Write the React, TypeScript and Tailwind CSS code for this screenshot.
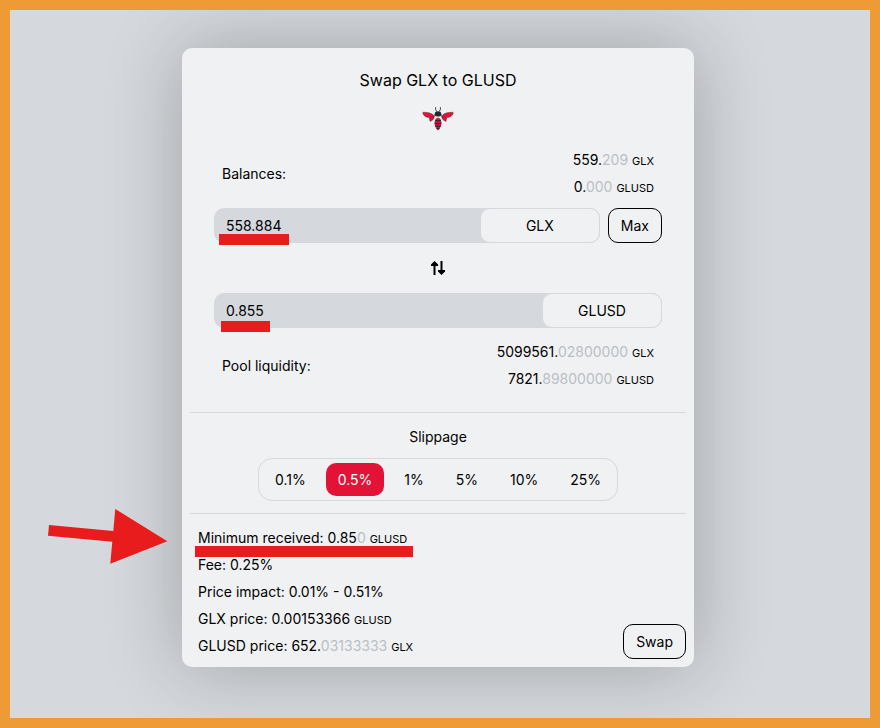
import { useState } from 'react';
import clsx from 'clsx';

interface AmountProps {
  whole: string;
  decimals?: string;
  unit: string;
}

const Amount = ({ whole, decimals, unit }: AmountProps) => (
  <span>
    {whole}
    {decimals && <span className="text-[#b9bfc5]">{decimals}</span>}{' '}
    <span className="text-[11px] leading-none">{unit}</span>
  </span>
);

interface TokenFieldProps {
  id: string;
  token: string;
  value: string;
  onChange: (value: string) => void;
  markClassName: string;
}

const TokenField = ({ id, token, value, onChange, markClassName }: TokenFieldProps) => (
  <div className="relative flex h-[35px] min-w-0 flex-1 rounded-[10px] bg-[#d5d8dd]">
    <input
      id={id}
      aria-label={`${token} amount`}
      className="min-w-0 flex-1 bg-transparent pl-3 outline-none"
      value={value}
      onChange={(e) => onChange(e.target.value)}
    />
    <button
      type="button"
      className="w-[120px] rounded-[10px] border border-[#d5d8dd] bg-[#f0f1f3]"
    >
      {token}
    </button>
    <span className={clsx('absolute h-[11px] bg-[#e81c1c]', markClassName)} />
  </div>
);

const BeeLogo = () => (
  <svg width="32" height="26" viewBox="0 0 32 26" aria-hidden="true">
    <g fill="none" stroke="#3b4045" strokeWidth="1">
      <path d="M13.6 1.2v2.2l1 2" />
      <path d="M18.4 1.2v2.2l-1 2" />
    </g>
    <path d="M12.8 7.6Q13 5.2 16 5.2t3.2 2.4l.6 1.6q-1.6 1.3-3.8 1.3t-3.8-1.3z" fill="#202a33" />
    <g fill="#e31337" stroke="#5a2530" strokeWidth=".5">
      <path d="M.8 7.2Q.4 6.2 2 6.2q6.4 0 9.4 2.8l1 1.4-3 1.6Q2 11.6.8 7.2z" />
      <path d="M12.4 10.6q-.4 3.4-4.2 4.8-1-1.800-.6-3.600z" />
      <path d="M31.2 7.2q.4-1-1.2-1-6.400 0-9.400 2.800l-1 1.400 3 1.600q7.400-.4 8.600-4.800z" />
      <path d="M19.6 10.6q.4 3.400 4.200 4.800 1-1.800.6-3.600z" />
    </g>
    <path d="M16 11.4q3.400 1.200 3.400 5.600 0 4.400-3.400 7.400-3.400-3-3.400-7.400 0-4.400 3.400-5.600z" fill="#d9153a" />
    <path
      d="M13.2 14.2q2.800 1 5.600 0M12.600 17q3.400 1.200 6.800 0M13 19.800q3 1.200 6 0M14.500 22.500q1.500.6 3 0"
      fill="none"
      stroke="#282630"
      strokeWidth="1.1"
    />
  </svg>
);

const SwapArrows = () => (
  <svg width="14" height="14" viewBox="0.5 0 14 14" aria-hidden="true">
    <g fill="none" stroke="#000" strokeWidth="2">
      <path d="M4 2v12" />
      <path d="M11 0v12" />
    </g>
    <path d="M4 0l3.600 3.600v1.400H.5V3.600z" />
    <path d="M11 14l3.500-3.600V9H7.500v1.400z" />
  </svg>
);

const slippages = ['0.1%', '0.5%', '1%', '5%', '10%', '25%'];

const outlineButton = 'h-[35px] rounded-[10px] border border-black px-3';

const App = () => {
  const [from, setFrom] = useState('558.884');
  const [to, setTo] = useState('0.855');
  const [slippage, setSlippage] = useState('0.5%');

  return (
    <div className="flex min-h-screen items-start justify-center overflow-hidden border-[10px] border-[#ee9a35] bg-[#d5d8dd] pt-[38px] pr-1 font-['Inter',sans-serif] text-sm text-black">
      <main className="relative w-full max-w-lg rounded-[10px] bg-[#f0f1f3] p-2 shadow-[0_0_75px_rgba(20,30,20,0.28)]">
        <h1 className="pt-3 text-center text-base leading-6">Swap GLX to GLUSD</h1>
        <div className="mt-[14px] flex justify-center">
          <BeeLogo />
        </div>

        <section className="px-6">
          <div className="mt-[14px] flex items-center justify-between px-2 leading-[27px]">
            <span>Balances:</span>
            <div className="flex flex-col text-right">
              <Amount whole="559." decimals="209" unit="GLX" />
              <Amount whole="0." decimals="000" unit="GLUSD" />
            </div>
          </div>
          <div className="mt-2 flex gap-2">
            <TokenField
              id="from"
              token="GLX"
              value={from}
              onChange={setFrom}
              markClassName="left-[5px] top-[26px] w-[70px]"
            />
            <button type="button" className={outlineButton}>
              Max
            </button>
          </div>
          <div className="flex h-[50px] items-center justify-center">
            <button type="button" aria-label="Switch tokens">
              <SwapArrows />
            </button>
          </div>
          <div className="flex">
            <TokenField
              id="to"
              token="GLUSD"
              value={to}
              onChange={setTo}
              markClassName="left-[7px] top-[28px] w-[49px]"
            />
          </div>
          <div className="mt-[10px] flex items-center justify-between px-2 leading-[27px]">
            <span>Pool liquidity:</span>
            <div className="flex flex-col text-right">
              <Amount whole="5099561." decimals="02800000" unit="GLX" />
              <Amount whole="7821." decimals="89800000" unit="GLUSD" />
            </div>
          </div>
        </section>

        <section className="mt-5 flex flex-col items-center border-y border-[#d5d8dd] pt-[10px] pb-3">
          <h2 className="leading-[27px]">Slippage</h2>
          <div className="mt-2 flex gap-2 rounded-[14px] border border-[#d5d8dd] p-1">
            {slippages.map((s) => (
              <button
                key={s}
                type="button"
                aria-pressed={s === slippage}
                onClick={() => setSlippage(s)}
                className={clsx(
                  'h-[33px] rounded-[10px] px-3',
                  s === slippage && 'bg-[#e31337] text-white',
                )}
              >
                {s}
              </button>
            ))}
          </div>
        </section>

        <section className="mt-[10px] flex items-end justify-between">
          <div className="flex flex-col pl-2 leading-[27px]">
            <div className="relative">
              Minimum received: <Amount whole="0.85" decimals="0" unit="GLUSD" />
              <span className="absolute top-[22px] -left-[3px] h-[11px] w-[218px] bg-[#e81c1c]" />
            </div>
            <div>Fee: 0.25%</div>
            <div>Price impact: 0.01% - 0.51%</div>
            <div>
              GLX price: <Amount whole="0.00153366" unit="GLUSD" />
            </div>
            <div>
              GLUSD price: <Amount whole="652." decimals="03133333" unit="GLX" />
            </div>
          </div>
          <button type="button" className={outlineButton}>
            Swap
          </button>
        </section>

        {/* arrow pointing at the minimum received line */}
        <svg
          className="absolute top-[460px] -left-[136px]"
          width="124"
          height="58"
          viewBox="46 508 124 58"
          aria-hidden="true"
        >
          <path
            d="M49 525L113.3 531L115.3 509L167.3 541.3L110.3 563.7L112.3 541.7L48 535.7Z"
            fill="#e81c1c"
          />
        </svg>
      </main>
    </div>
  );
};

export default App;
